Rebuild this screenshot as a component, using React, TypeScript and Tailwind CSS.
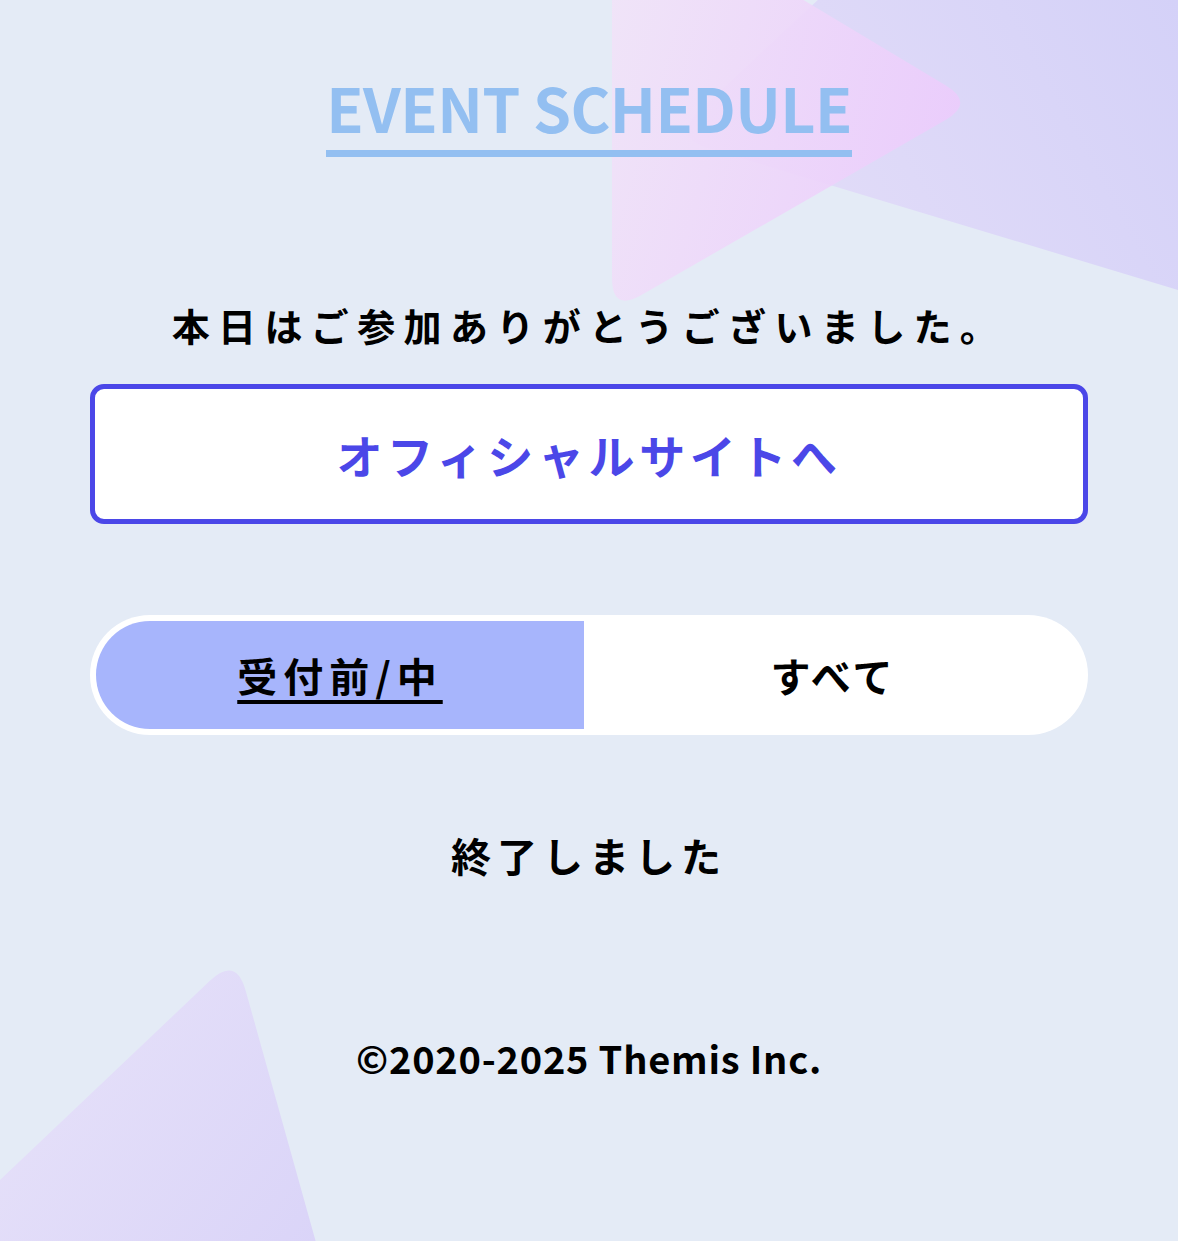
import React from 'react';

type Pt = [number, number];

// builds a path for a polygon with rounded corners
const roundedPath = (pts: Pt[], r: number) => {
  const n = pts.length;
  const seg: string[] = [];
  for (let i = 0; i < n; i++) {
    const p0 = pts[(i - 1 + n) % n];
    const p1 = pts[i];
    const p2 = pts[(i + 1) % n];
    const d1 = Math.hypot(p0[0] - p1[0], p0[1] - p1[1]);
    const d2 = Math.hypot(p2[0] - p1[0], p2[1] - p1[1]);
    const a: Pt = [p1[0] + ((p0[0] - p1[0]) / d1) * r, p1[1] + ((p0[1] - p1[1]) / d1) * r];
    const b: Pt = [p1[0] + ((p2[0] - p1[0]) / d2) * r, p1[1] + ((p2[1] - p1[1]) / d2) * r];
    seg.push(`${i === 0 ? 'M' : 'L'}${a[0]},${a[1]} Q${p1[0]},${p1[1]} ${b[0]},${b[1]}`);
  }
  return seg.join(' ') + ' Z';
};

const Backdrop = () => <svg className="absolute inset-0 w-full h-full pointer-events-none" viewBox="0 0 1178 1241" preserveAspectRatio="none">
    <defs>
      <linearGradient id="lav" x1="1178" y1="0" x2="760" y2="230" gradientUnits="userSpaceOnUse">
        <stop offset="0" stopColor="#d4d1f8" />
        <stop offset="1" stopColor="#e3ddf8" />
      </linearGradient>
      <linearGradient id="pink" x1="612" y1="0" x2="960" y2="100" gradientUnits="userSpaceOnUse">
        <stop offset="0" stopColor="#f1e3f8" stopOpacity="0.9" />
        <stop offset="1" stopColor="#ecccfc" stopOpacity="0.9" />
      </linearGradient>
      <linearGradient id="bl" x1="0" y1="1000" x2="320" y2="1241" gradientUnits="userSpaceOnUse">
        <stop offset="0" stopColor="#e7e2f9" />
        <stop offset="1" stopColor="#dad4f8" />
      </linearGradient>
    </defs>
    <path d={roundedPath([[671, 137], [1150, -310], [1450, 372]], 40)} fill="url(#lav)" />
    <path d={roundedPath([[612, -115], [975, 103], [612, 312]], 34)} fill="url(#pink)" />
    <path d={roundedPath([[236, 956], [360, 1400], [-300, 1465]], 36)} fill="url(#bl)" />
  </svg>;

const App = () => {
  return <div className="relative w-full min-h-[1241px] overflow-hidden bg-[#e4ebf6]" style={{
    fontFamily: '"Noto Sans CJK JP", "Noto Sans", sans-serif'
  }}>
      <Backdrop />
      <div className="relative w-[998px] mx-auto flex flex-col items-center">
        <h1 className="mt-[76px] inline-block text-[61px] leading-none font-bold tracking-[-0.01em] text-[#93bff1] pb-[13px] border-b-[7px] border-[#93bff1]">
          EVENT SCHEDULE
        </h1>

        <p className="mt-[149px] text-[38px] leading-none font-bold tracking-[0.22em] text-black">
          本日はご参加ありがとうございました。
        </p>

        <button className="mt-[40px] w-full h-[140px] bg-white border-[5px] border-[#4b47e8] rounded-[14px] text-[46px] leading-none font-bold tracking-[0.1em] text-[#4b47e8]">
          オフィシャルサイトへ
        </button>

        <div className="mt-[91px] w-full h-[120px] bg-white rounded-full p-[6px] flex">
          <div className="w-[488px] bg-[#a7b5fc] rounded-l-full flex items-center justify-center">
            <span className="text-[40px] leading-none font-bold text-black tracking-[0.15em] underline decoration-[4px] underline-offset-[8px]">
              受付前/中
            </span>
          </div>
          <div className="flex-1 flex items-center justify-center">
            <span className="text-[40px] leading-none font-bold text-black tracking-[0.08em]">
              すべて
            </span>
          </div>
        </div>

        <p className="mt-[100px] text-[40px] leading-none font-bold tracking-[0.15em] text-black">
          終了しました
        </p>

        <p className="mt-[164px] text-[38px] leading-none font-bold tracking-[0.02em] text-black">
          ©2020-2025 Themis Inc.
        </p>
      </div>
    </div>;
};

export default App;
